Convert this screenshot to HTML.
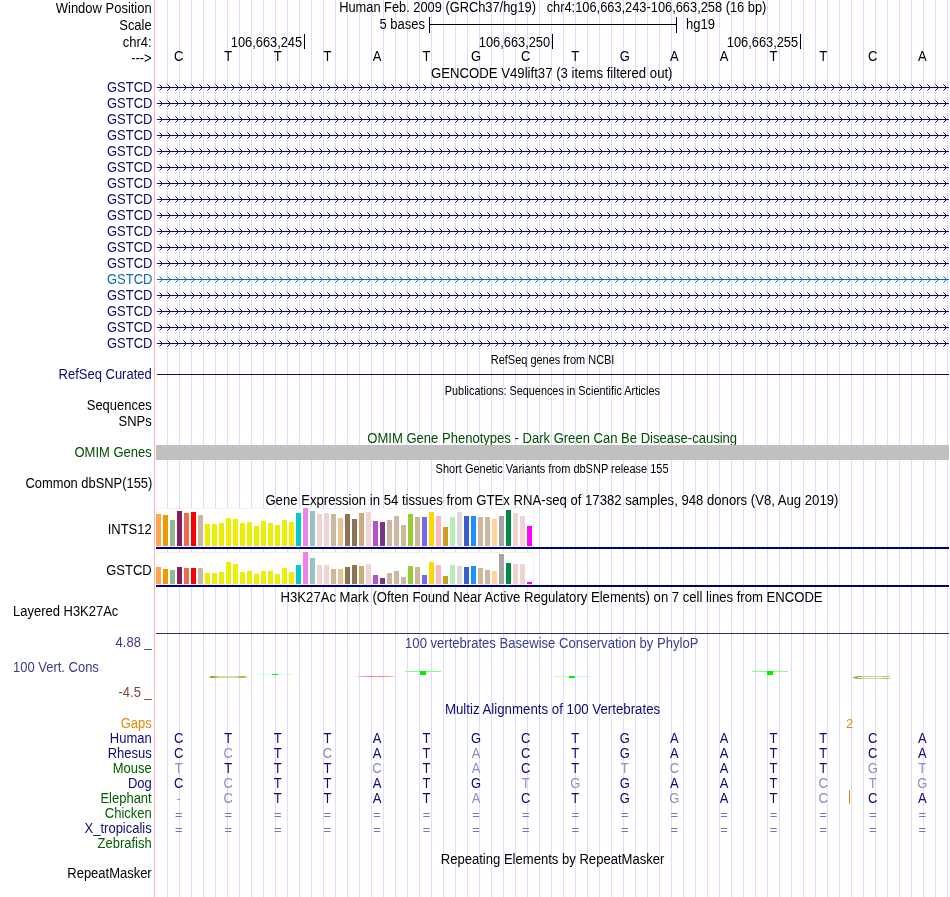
<!DOCTYPE html>
<html><head><meta charset="utf-8"><title>UCSC Genome Browser</title>
<style>html,body{margin:0;padding:0;background:#fff}svg{display:block;will-change:transform}text{font-size:13px;font-family:'Liberation Sans', sans-serif;white-space:pre}</style>
</head><body>
<svg width="950" height="897" viewBox="0 0 950 897">
<rect x="0" y="0" width="950" height="897" fill="#fff"/>
<g shape-rendering="crispEdges">
<rect x="167" y="0" width="1" height="897" fill="#dcdcff"/>
<rect x="179" y="0" width="1" height="897" fill="#dcdcff"/>
<rect x="191" y="0" width="1" height="897" fill="#dcdcff"/>
<rect x="203" y="0" width="1" height="897" fill="#dcdcff"/>
<rect x="215" y="0" width="1" height="897" fill="#dcdcff"/>
<rect x="227" y="0" width="1" height="897" fill="#dcdcff"/>
<rect x="239" y="0" width="1" height="897" fill="#dcdcff"/>
<rect x="251" y="0" width="1" height="897" fill="#dcdcff"/>
<rect x="263" y="0" width="1" height="897" fill="#dcdcff"/>
<rect x="275" y="0" width="1" height="897" fill="#dcdcff"/>
<rect x="287" y="0" width="1" height="897" fill="#dcdcff"/>
<rect x="299" y="0" width="1" height="897" fill="#dcdcff"/>
<rect x="311" y="0" width="1" height="897" fill="#dcdcff"/>
<rect x="323" y="0" width="1" height="897" fill="#dcdcff"/>
<rect x="335" y="0" width="1" height="897" fill="#dcdcff"/>
<rect x="347" y="0" width="1" height="897" fill="#dcdcff"/>
<rect x="359" y="0" width="1" height="897" fill="#dcdcff"/>
<rect x="371" y="0" width="1" height="897" fill="#dcdcff"/>
<rect x="383" y="0" width="1" height="897" fill="#dcdcff"/>
<rect x="395" y="0" width="1" height="897" fill="#dcdcff"/>
<rect x="407" y="0" width="1" height="897" fill="#dcdcff"/>
<rect x="419" y="0" width="1" height="897" fill="#dcdcff"/>
<rect x="431" y="0" width="1" height="897" fill="#dcdcff"/>
<rect x="443" y="0" width="1" height="897" fill="#dcdcff"/>
<rect x="455" y="0" width="1" height="897" fill="#dcdcff"/>
<rect x="467" y="0" width="1" height="897" fill="#dcdcff"/>
<rect x="479" y="0" width="1" height="897" fill="#dcdcff"/>
<rect x="491" y="0" width="1" height="897" fill="#dcdcff"/>
<rect x="503" y="0" width="1" height="897" fill="#dcdcff"/>
<rect x="515" y="0" width="1" height="897" fill="#dcdcff"/>
<rect x="527" y="0" width="1" height="897" fill="#dcdcff"/>
<rect x="539" y="0" width="1" height="897" fill="#dcdcff"/>
<rect x="551" y="0" width="1" height="897" fill="#dcdcff"/>
<rect x="563" y="0" width="1" height="897" fill="#dcdcff"/>
<rect x="575" y="0" width="1" height="897" fill="#dcdcff"/>
<rect x="587" y="0" width="1" height="897" fill="#dcdcff"/>
<rect x="599" y="0" width="1" height="897" fill="#dcdcff"/>
<rect x="611" y="0" width="1" height="897" fill="#dcdcff"/>
<rect x="623" y="0" width="1" height="897" fill="#dcdcff"/>
<rect x="635" y="0" width="1" height="897" fill="#dcdcff"/>
<rect x="647" y="0" width="1" height="897" fill="#dcdcff"/>
<rect x="659" y="0" width="1" height="897" fill="#dcdcff"/>
<rect x="671" y="0" width="1" height="897" fill="#dcdcff"/>
<rect x="683" y="0" width="1" height="897" fill="#dcdcff"/>
<rect x="695" y="0" width="1" height="897" fill="#dcdcff"/>
<rect x="707" y="0" width="1" height="897" fill="#dcdcff"/>
<rect x="719" y="0" width="1" height="897" fill="#dcdcff"/>
<rect x="731" y="0" width="1" height="897" fill="#dcdcff"/>
<rect x="743" y="0" width="1" height="897" fill="#dcdcff"/>
<rect x="755" y="0" width="1" height="897" fill="#dcdcff"/>
<rect x="767" y="0" width="1" height="897" fill="#dcdcff"/>
<rect x="779" y="0" width="1" height="897" fill="#dcdcff"/>
<rect x="791" y="0" width="1" height="897" fill="#dcdcff"/>
<rect x="803" y="0" width="1" height="897" fill="#dcdcff"/>
<rect x="815" y="0" width="1" height="897" fill="#dcdcff"/>
<rect x="827" y="0" width="1" height="897" fill="#dcdcff"/>
<rect x="839" y="0" width="1" height="897" fill="#dcdcff"/>
<rect x="851" y="0" width="1" height="897" fill="#dcdcff"/>
<rect x="863" y="0" width="1" height="897" fill="#dcdcff"/>
<rect x="875" y="0" width="1" height="897" fill="#dcdcff"/>
<rect x="887" y="0" width="1" height="897" fill="#dcdcff"/>
<rect x="899" y="0" width="1" height="897" fill="#dcdcff"/>
<rect x="911" y="0" width="1" height="897" fill="#dcdcff"/>
<rect x="923" y="0" width="1" height="897" fill="#dcdcff"/>
<rect x="935" y="0" width="1" height="897" fill="#dcdcff"/>
<rect x="947" y="0" width="1" height="897" fill="#dcdcff"/>
<rect x="154" y="0" width="1" height="897" fill="#ffb4b4"/>
</g>
<text transform="translate(151.7 13) scale(1 1.06)" text-anchor="end">Window Position</text>
<text transform="translate(151.7 30) scale(1 1.06)" text-anchor="end">Scale</text>
<text transform="translate(151.7 47) scale(1 1.06)" text-anchor="end">chr4:</text>
<text transform="translate(151.7 63) scale(1 1.06)" text-anchor="end">---&gt;</text>
<text transform="translate(339.2 12) scale(1 1.06)" textLength="427.1" lengthAdjust="spacingAndGlyphs">Human Feb. 2009 (GRCh37/hg19)   chr4:106,663,243-106,663,258 (16 bp)</text>
<text transform="translate(425 29) scale(1 1.06)" text-anchor="end">5 bases</text>
<text transform="translate(686 29) scale(1 1.06)">hg19</text>
<g shape-rendering="crispEdges">
<rect x="429" y="24" width="248" height="1" fill="#000"/>
<rect x="429" y="17" width="1" height="16" fill="#000"/>
<rect x="676" y="17" width="1" height="16" fill="#000"/>
<rect x="304" y="34" width="1" height="15" fill="#000"/>
<rect x="552" y="34" width="1" height="15" fill="#000"/>
<rect x="800" y="34" width="1" height="15" fill="#000"/>
</g>
<text transform="translate(230.8 47) scale(1 1.06)" textLength="71.3" lengthAdjust="spacingAndGlyphs">106,663,245</text>
<text transform="translate(478.8 47) scale(1 1.06)" textLength="71.3" lengthAdjust="spacingAndGlyphs">106,663,250</text>
<text transform="translate(726.8 47) scale(1 1.06)" textLength="71.3" lengthAdjust="spacingAndGlyphs">106,663,255</text>
<text transform="translate(178.7 61) scale(1 1.06)" text-anchor="middle">C</text>
<text transform="translate(228.3 61) scale(1 1.06)" text-anchor="middle">T</text>
<text transform="translate(277.8 61) scale(1 1.06)" text-anchor="middle">T</text>
<text transform="translate(327.4 61) scale(1 1.06)" text-anchor="middle">T</text>
<text transform="translate(377.0 61) scale(1 1.06)" text-anchor="middle">A</text>
<text transform="translate(426.5 61) scale(1 1.06)" text-anchor="middle">T</text>
<text transform="translate(476.1 61) scale(1 1.06)" text-anchor="middle">G</text>
<text transform="translate(525.7 61) scale(1 1.06)" text-anchor="middle">C</text>
<text transform="translate(575.3 61) scale(1 1.06)" text-anchor="middle">T</text>
<text transform="translate(624.8 61) scale(1 1.06)" text-anchor="middle">G</text>
<text transform="translate(674.4 61) scale(1 1.06)" text-anchor="middle">A</text>
<text transform="translate(724.0 61) scale(1 1.06)" text-anchor="middle">A</text>
<text transform="translate(773.5 61) scale(1 1.06)" text-anchor="middle">T</text>
<text transform="translate(823.1 61) scale(1 1.06)" text-anchor="middle">T</text>
<text transform="translate(872.7 61) scale(1 1.06)" text-anchor="middle">C</text>
<text transform="translate(922.2 61) scale(1 1.06)" text-anchor="middle">A</text>
<text transform="translate(431.0 78) scale(1 1.06)" textLength="241.5" lengthAdjust="spacingAndGlyphs">GENCODE V49lift37 (3 items filtered out)</text>
<defs><path id="cv" d="M157 0.5H949M159.5 -2.5l3 3l-3 3M167.5 -2.5l3 3l-3 3M175.5 -2.5l3 3l-3 3M183.5 -2.5l3 3l-3 3M191.5 -2.5l3 3l-3 3M199.5 -2.5l3 3l-3 3M207.5 -2.5l3 3l-3 3M215.5 -2.5l3 3l-3 3M223.5 -2.5l3 3l-3 3M231.5 -2.5l3 3l-3 3M239.5 -2.5l3 3l-3 3M247.5 -2.5l3 3l-3 3M255.5 -2.5l3 3l-3 3M263.5 -2.5l3 3l-3 3M271.5 -2.5l3 3l-3 3M279.5 -2.5l3 3l-3 3M287.5 -2.5l3 3l-3 3M295.5 -2.5l3 3l-3 3M303.5 -2.5l3 3l-3 3M311.5 -2.5l3 3l-3 3M319.5 -2.5l3 3l-3 3M327.5 -2.5l3 3l-3 3M335.5 -2.5l3 3l-3 3M343.5 -2.5l3 3l-3 3M351.5 -2.5l3 3l-3 3M359.5 -2.5l3 3l-3 3M367.5 -2.5l3 3l-3 3M375.5 -2.5l3 3l-3 3M383.5 -2.5l3 3l-3 3M391.5 -2.5l3 3l-3 3M399.5 -2.5l3 3l-3 3M407.5 -2.5l3 3l-3 3M415.5 -2.5l3 3l-3 3M423.5 -2.5l3 3l-3 3M431.5 -2.5l3 3l-3 3M439.5 -2.5l3 3l-3 3M447.5 -2.5l3 3l-3 3M455.5 -2.5l3 3l-3 3M463.5 -2.5l3 3l-3 3M471.5 -2.5l3 3l-3 3M479.5 -2.5l3 3l-3 3M487.5 -2.5l3 3l-3 3M495.5 -2.5l3 3l-3 3M503.5 -2.5l3 3l-3 3M511.5 -2.5l3 3l-3 3M519.5 -2.5l3 3l-3 3M527.5 -2.5l3 3l-3 3M535.5 -2.5l3 3l-3 3M543.5 -2.5l3 3l-3 3M551.5 -2.5l3 3l-3 3M559.5 -2.5l3 3l-3 3M567.5 -2.5l3 3l-3 3M575.5 -2.5l3 3l-3 3M583.5 -2.5l3 3l-3 3M591.5 -2.5l3 3l-3 3M599.5 -2.5l3 3l-3 3M607.5 -2.5l3 3l-3 3M615.5 -2.5l3 3l-3 3M623.5 -2.5l3 3l-3 3M631.5 -2.5l3 3l-3 3M639.5 -2.5l3 3l-3 3M647.5 -2.5l3 3l-3 3M655.5 -2.5l3 3l-3 3M663.5 -2.5l3 3l-3 3M671.5 -2.5l3 3l-3 3M679.5 -2.5l3 3l-3 3M687.5 -2.5l3 3l-3 3M695.5 -2.5l3 3l-3 3M703.5 -2.5l3 3l-3 3M711.5 -2.5l3 3l-3 3M719.5 -2.5l3 3l-3 3M727.5 -2.5l3 3l-3 3M735.5 -2.5l3 3l-3 3M743.5 -2.5l3 3l-3 3M751.5 -2.5l3 3l-3 3M759.5 -2.5l3 3l-3 3M767.5 -2.5l3 3l-3 3M775.5 -2.5l3 3l-3 3M783.5 -2.5l3 3l-3 3M791.5 -2.5l3 3l-3 3M799.5 -2.5l3 3l-3 3M807.5 -2.5l3 3l-3 3M815.5 -2.5l3 3l-3 3M823.5 -2.5l3 3l-3 3M831.5 -2.5l3 3l-3 3M839.5 -2.5l3 3l-3 3M847.5 -2.5l3 3l-3 3M855.5 -2.5l3 3l-3 3M863.5 -2.5l3 3l-3 3M871.5 -2.5l3 3l-3 3M879.5 -2.5l3 3l-3 3M887.5 -2.5l3 3l-3 3M895.5 -2.5l3 3l-3 3M903.5 -2.5l3 3l-3 3M911.5 -2.5l3 3l-3 3M919.5 -2.5l3 3l-3 3M927.5 -2.5l3 3l-3 3M935.5 -2.5l3 3l-3 3M943.5 -2.5l3 3l-3 3" fill="none" stroke-width="1"/></defs>
<text transform="translate(152.4 92) scale(1 1.06)" text-anchor="end" fill="#0c0c78">GSTCD</text>
<use href="#cv" y="87" stroke="#0c0c78"/>
<text transform="translate(152.4 108) scale(1 1.06)" text-anchor="end" fill="#0c0c78">GSTCD</text>
<use href="#cv" y="103" stroke="#0c0c78"/>
<text transform="translate(152.4 124) scale(1 1.06)" text-anchor="end" fill="#0c0c78">GSTCD</text>
<use href="#cv" y="119" stroke="#0c0c78"/>
<text transform="translate(152.4 140) scale(1 1.06)" text-anchor="end" fill="#0c0c78">GSTCD</text>
<use href="#cv" y="135" stroke="#0c0c78"/>
<text transform="translate(152.4 156) scale(1 1.06)" text-anchor="end" fill="#0c0c78">GSTCD</text>
<use href="#cv" y="151" stroke="#0c0c78"/>
<text transform="translate(152.4 172) scale(1 1.06)" text-anchor="end" fill="#0c0c78">GSTCD</text>
<use href="#cv" y="167" stroke="#0c0c78"/>
<text transform="translate(152.4 188) scale(1 1.06)" text-anchor="end" fill="#0c0c78">GSTCD</text>
<use href="#cv" y="183" stroke="#0c0c78"/>
<text transform="translate(152.4 204) scale(1 1.06)" text-anchor="end" fill="#0c0c78">GSTCD</text>
<use href="#cv" y="199" stroke="#0c0c78"/>
<text transform="translate(152.4 220) scale(1 1.06)" text-anchor="end" fill="#0c0c78">GSTCD</text>
<use href="#cv" y="215" stroke="#0c0c78"/>
<text transform="translate(152.4 236) scale(1 1.06)" text-anchor="end" fill="#0c0c78">GSTCD</text>
<use href="#cv" y="231" stroke="#0c0c78"/>
<text transform="translate(152.4 252) scale(1 1.06)" text-anchor="end" fill="#0c0c78">GSTCD</text>
<use href="#cv" y="247" stroke="#0c0c78"/>
<text transform="translate(152.4 268) scale(1 1.06)" text-anchor="end" fill="#0c0c78">GSTCD</text>
<use href="#cv" y="263" stroke="#0c0c78"/>
<text transform="translate(152.4 284) scale(1 1.06)" text-anchor="end" fill="#0a6cae">GSTCD</text>
<use href="#cv" y="279" stroke="#0a6cae"/>
<text transform="translate(152.4 300) scale(1 1.06)" text-anchor="end" fill="#0c0c78">GSTCD</text>
<use href="#cv" y="295" stroke="#0c0c78"/>
<text transform="translate(152.4 316) scale(1 1.06)" text-anchor="end" fill="#0c0c78">GSTCD</text>
<use href="#cv" y="311" stroke="#0c0c78"/>
<text transform="translate(152.4 332) scale(1 1.06)" text-anchor="end" fill="#0c0c78">GSTCD</text>
<use href="#cv" y="327" stroke="#0c0c78"/>
<text transform="translate(152.4 348) scale(1 1.06)" text-anchor="end" fill="#0c0c78">GSTCD</text>
<use href="#cv" y="343" stroke="#0c0c78"/>
<text x="490.8" y="364" font-size="11" textLength="123.6" lengthAdjust="spacingAndGlyphs">RefSeq genes from NCBI</text>
<text transform="translate(151.7 379) scale(1 1.06)" text-anchor="end" fill="#0c0c78">RefSeq Curated</text>
<rect x="157" y="374" width="792" height="1" fill="#0c0c78" shape-rendering="crispEdges"/>
<text x="444.8" y="395" font-size="11" textLength="215.1" lengthAdjust="spacingAndGlyphs">Publications: Sequences in Scientific Articles</text>
<text transform="translate(151.7 410) scale(1 1.06)" text-anchor="end">Sequences</text>
<text transform="translate(151.7 426) scale(1 1.06)" text-anchor="end">SNPs</text>
<text transform="translate(367.3 443) scale(1 1.06)" fill="#005000" textLength="369.8" lengthAdjust="spacingAndGlyphs">OMIM Gene Phenotypes - Dark Green Can Be Disease-causing</text>
<text transform="translate(151.7 457) scale(1 1.06)" text-anchor="end" fill="#005000">OMIM Genes</text>
<rect x="156" y="445" width="793" height="15" fill="#c0c0c0" shape-rendering="crispEdges"/>
<text x="435.6" y="473" font-size="11" textLength="232.9" lengthAdjust="spacingAndGlyphs">Short Genetic Variants from dbSNP release 155</text>
<text transform="translate(25.5 488) scale(1 1.06)" textLength="126.8" lengthAdjust="spacingAndGlyphs">Common dbSNP(155)</text>
<text transform="translate(265.4 504.5) scale(1 1.06)" textLength="573.0" lengthAdjust="spacingAndGlyphs">Gene Expression in 54 tissues from GTEx RNA-seq of 17382 samples, 948 donors (V8, Aug 2019)</text>
<g shape-rendering="crispEdges">
<rect x="156" y="508" width="378" height="39" fill="#f2f2f2"/>
<rect x="157" y="509" width="376" height="37" fill="#fff"/>
<rect x="156" y="552" width="378" height="33" fill="#f2f2f2"/>
<rect x="157" y="553" width="376" height="31" fill="#fff"/>
<rect x="156" y="514" width="5" height="32" fill="#FFA54F"/>
<rect x="156" y="567" width="5" height="17" fill="#FFA54F"/>
<rect x="163" y="515" width="5" height="31" fill="#EE9A00"/>
<rect x="163" y="569" width="5" height="15" fill="#EE9A00"/>
<rect x="170" y="520" width="5" height="26" fill="#8FBC8F"/>
<rect x="170" y="570" width="5" height="14" fill="#8FBC8F"/>
<rect x="177" y="511" width="5" height="35" fill="#8B1C62"/>
<rect x="177" y="567" width="5" height="17" fill="#8B1C62"/>
<rect x="184" y="513" width="5" height="33" fill="#EE6A50"/>
<rect x="184" y="568" width="5" height="16" fill="#EE6A50"/>
<rect x="191" y="512" width="5" height="34" fill="#FF0000"/>
<rect x="191" y="568" width="5" height="16" fill="#FF0000"/>
<rect x="198" y="515" width="5" height="31" fill="#CDB79E"/>
<rect x="198" y="568" width="5" height="16" fill="#CDB79E"/>
<rect x="205" y="524" width="5" height="22" fill="#EEEE00"/>
<rect x="205" y="573" width="5" height="11" fill="#EEEE00"/>
<rect x="212" y="524" width="5" height="22" fill="#EEEE00"/>
<rect x="212" y="573" width="5" height="11" fill="#EEEE00"/>
<rect x="219" y="523" width="5" height="23" fill="#EEEE00"/>
<rect x="219" y="572" width="5" height="12" fill="#EEEE00"/>
<rect x="226" y="518" width="5" height="28" fill="#EEEE00"/>
<rect x="226" y="562" width="5" height="22" fill="#EEEE00"/>
<rect x="233" y="519" width="5" height="27" fill="#EEEE00"/>
<rect x="233" y="564" width="5" height="20" fill="#EEEE00"/>
<rect x="240" y="523" width="5" height="23" fill="#EEEE00"/>
<rect x="240" y="572" width="5" height="12" fill="#EEEE00"/>
<rect x="247" y="522" width="5" height="24" fill="#EEEE00"/>
<rect x="247" y="571" width="5" height="13" fill="#EEEE00"/>
<rect x="254" y="526" width="5" height="20" fill="#EEEE00"/>
<rect x="254" y="574" width="5" height="10" fill="#EEEE00"/>
<rect x="261" y="521" width="5" height="25" fill="#EEEE00"/>
<rect x="261" y="571" width="5" height="13" fill="#EEEE00"/>
<rect x="268" y="523" width="5" height="23" fill="#EEEE00"/>
<rect x="268" y="571" width="5" height="13" fill="#EEEE00"/>
<rect x="275" y="525" width="5" height="21" fill="#EEEE00"/>
<rect x="275" y="574" width="5" height="10" fill="#EEEE00"/>
<rect x="282" y="520" width="5" height="26" fill="#EEEE00"/>
<rect x="282" y="568" width="5" height="16" fill="#EEEE00"/>
<rect x="289" y="522" width="5" height="24" fill="#EEEE00"/>
<rect x="289" y="572" width="5" height="12" fill="#EEEE00"/>
<rect x="296" y="513" width="5" height="33" fill="#00CDCD"/>
<rect x="296" y="565" width="5" height="19" fill="#00CDCD"/>
<rect x="303" y="508" width="5" height="38" fill="#EE82EE"/>
<rect x="303" y="552" width="5" height="32" fill="#EE82EE"/>
<rect x="310" y="511" width="5" height="35" fill="#9AC0CD"/>
<rect x="310" y="558" width="5" height="26" fill="#9AC0CD"/>
<rect x="317" y="514" width="5" height="32" fill="#EED5D2"/>
<rect x="317" y="565" width="5" height="19" fill="#EED5D2"/>
<rect x="324" y="513" width="5" height="33" fill="#EED5D2"/>
<rect x="324" y="565" width="5" height="19" fill="#EED5D2"/>
<rect x="331" y="514" width="5" height="32" fill="#CDB79E"/>
<rect x="331" y="569" width="5" height="15" fill="#CDB79E"/>
<rect x="338" y="518" width="5" height="28" fill="#EEC591"/>
<rect x="338" y="569" width="5" height="15" fill="#EEC591"/>
<rect x="345" y="514" width="5" height="32" fill="#8B7355"/>
<rect x="345" y="567" width="5" height="17" fill="#8B7355"/>
<rect x="352" y="519" width="5" height="27" fill="#8B7355"/>
<rect x="352" y="565" width="5" height="19" fill="#8B7355"/>
<rect x="359" y="513" width="5" height="33" fill="#CDAA7D"/>
<rect x="359" y="566" width="5" height="18" fill="#CDAA7D"/>
<rect x="366" y="512" width="5" height="34" fill="#EED5D2"/>
<rect x="366" y="564" width="5" height="20" fill="#EED5D2"/>
<rect x="373" y="521" width="5" height="25" fill="#B452CD"/>
<rect x="373" y="575" width="5" height="9" fill="#B452CD"/>
<rect x="380" y="522" width="5" height="24" fill="#7A378B"/>
<rect x="380" y="578" width="5" height="6" fill="#7A378B"/>
<rect x="387" y="520" width="5" height="26" fill="#CDB79E"/>
<rect x="387" y="573" width="5" height="11" fill="#CDB79E"/>
<rect x="394" y="516" width="5" height="30" fill="#CDB79E"/>
<rect x="394" y="571" width="5" height="13" fill="#CDB79E"/>
<rect x="401" y="525" width="5" height="21" fill="#CDB79E"/>
<rect x="401" y="577" width="5" height="7" fill="#CDB79E"/>
<rect x="408" y="514" width="5" height="32" fill="#9ACD32"/>
<rect x="408" y="566" width="5" height="18" fill="#9ACD32"/>
<rect x="415" y="517" width="5" height="29" fill="#CDB79E"/>
<rect x="415" y="567" width="5" height="17" fill="#CDB79E"/>
<rect x="422" y="517" width="5" height="29" fill="#7A67EE"/>
<rect x="422" y="575" width="5" height="9" fill="#7A67EE"/>
<rect x="429" y="512" width="5" height="34" fill="#FFD700"/>
<rect x="429" y="562" width="5" height="22" fill="#FFD700"/>
<rect x="436" y="516" width="5" height="30" fill="#FFB6C1"/>
<rect x="436" y="565" width="5" height="19" fill="#FFB6C1"/>
<rect x="443" y="527" width="5" height="19" fill="#CD9B1D"/>
<rect x="443" y="576" width="5" height="8" fill="#CD9B1D"/>
<rect x="450" y="517" width="5" height="29" fill="#B4EEB4"/>
<rect x="450" y="565" width="5" height="19" fill="#B4EEB4"/>
<rect x="457" y="512" width="5" height="34" fill="#D9D9D9"/>
<rect x="457" y="566" width="5" height="18" fill="#D9D9D9"/>
<rect x="464" y="516" width="5" height="30" fill="#3A5FCD"/>
<rect x="464" y="567" width="5" height="17" fill="#3A5FCD"/>
<rect x="471" y="516" width="5" height="30" fill="#1E90FF"/>
<rect x="471" y="566" width="5" height="18" fill="#1E90FF"/>
<rect x="478" y="517" width="5" height="29" fill="#CDB79E"/>
<rect x="478" y="568" width="5" height="16" fill="#CDB79E"/>
<rect x="485" y="517" width="5" height="29" fill="#CDB79E"/>
<rect x="485" y="570" width="5" height="14" fill="#CDB79E"/>
<rect x="492" y="519" width="5" height="27" fill="#FFD39B"/>
<rect x="492" y="571" width="5" height="13" fill="#FFD39B"/>
<rect x="499" y="516" width="5" height="30" fill="#A6A6A6"/>
<rect x="499" y="554" width="5" height="30" fill="#A6A6A6"/>
<rect x="506" y="510" width="5" height="36" fill="#008B45"/>
<rect x="506" y="563" width="5" height="21" fill="#008B45"/>
<rect x="513" y="513" width="5" height="33" fill="#EED5D2"/>
<rect x="513" y="564" width="5" height="20" fill="#EED5D2"/>
<rect x="520" y="516" width="5" height="30" fill="#EED5D2"/>
<rect x="520" y="564" width="5" height="20" fill="#EED5D2"/>
<rect x="527" y="526" width="5" height="20" fill="#FF00FF"/>
<rect x="527" y="582" width="5" height="2" fill="#FF00FF"/>
<rect x="156" y="547" width="793" height="2" fill="#00007f"/>
<rect x="156" y="585" width="793" height="2" fill="#00007f"/>
</g>
<text transform="translate(151.7 534) scale(1 1.06)" text-anchor="end">INTS12</text>
<text transform="translate(151.7 575) scale(1 1.06)" text-anchor="end">GSTCD</text>
<text transform="translate(280.6 602) scale(1 1.06)" textLength="542.0" lengthAdjust="spacingAndGlyphs">H3K27Ac Mark (Often Found Near Active Regulatory Elements) on 7 cell lines from ENCODE</text>
<text transform="translate(13 616) scale(1 1.06)">Layered H3K27Ac</text>
<rect x="156" y="633" width="793" height="1" fill="#3a2a6c" shape-rendering="crispEdges"/>
<text transform="translate(151.7 647) scale(1 1.06)" text-anchor="end" fill="#3c3c8c">4.88 _</text>
<text transform="translate(405.1 648) scale(1 1.06)" fill="#3c3c8c" textLength="293.3" lengthAdjust="spacingAndGlyphs">100 vertebrates Basewise Conservation by PhyloP</text>
<text transform="translate(13 672) scale(1 1.06)" fill="#3c3c8c">100 Vert. Cons</text>
<text transform="translate(151.7 697) scale(1 1.06)" text-anchor="end" fill="#8c3c3c">-4.5 _</text>
<defs><linearGradient id="ol1" x1="0" x2="1" y1="0" y2="0"><stop offset="0" stop-color="#bcbc50"/><stop offset="0.05" stop-color="#a4a41c"/><stop offset="0.14" stop-color="#b0b034"/><stop offset="0.24" stop-color="#d6d69a"/><stop offset="0.72" stop-color="#dadaa4"/><stop offset="0.82" stop-color="#b8b848"/><stop offset="0.92" stop-color="#b4b440"/><stop offset="1" stop-color="#e6e6c0"/></linearGradient><linearGradient id="ol2" x1="0" x2="1" y1="0" y2="0"><stop offset="0" stop-color="#a8a828"/><stop offset="0.2" stop-color="#b0b030"/><stop offset="0.3" stop-color="#d2d290"/><stop offset="0.75" stop-color="#d2d290"/><stop offset="0.85" stop-color="#b4b43c"/><stop offset="0.95" stop-color="#c4c468"/><stop offset="1" stop-color="#e8e8c8"/></linearGradient><linearGradient id="rd" x1="0" x2="1" y1="0" y2="0"><stop offset="0" stop-color="#ffd8d8"/><stop offset="0.15" stop-color="#ff9c9c"/><stop offset="0.38" stop-color="#ff7070"/><stop offset="0.5" stop-color="#ffa8a8"/><stop offset="0.68" stop-color="#ff7474"/><stop offset="0.88" stop-color="#ffa0a0"/><stop offset="1" stop-color="#ffdcdc"/></linearGradient></defs>
<g shape-rendering="crispEdges">
<rect x="209.5" y="676" width="37.5" height="2" fill="url(#ol1)" shape-rendering="auto"/>
<rect x="257" y="674" width="36" height="1" fill="#d4ffd4"/>
<rect x="272" y="674" width="6" height="1" fill="#00ee00"/>
<rect x="357" y="676" width="37.5" height="1" fill="url(#rd)"/>
<rect x="405" y="671" width="36" height="1" fill="#84ff84"/>
<rect x="420" y="671" width="6" height="4" fill="#00ee00"/>
<rect x="554" y="676" width="36" height="1" fill="#c8ffc8"/>
<rect x="569" y="676" width="6" height="2" fill="#00ee00"/>
<rect x="752" y="671" width="36" height="1" fill="#84ff84"/>
<rect x="767" y="671" width="6" height="4" fill="#00ee00"/>
</g>
<path d="M853 677.5L858 676.5H890.5M853 677.5L858 678.5H890.5" stroke="url(#ol2)" stroke-width="1" fill="none"/>
<rect x="853" y="677" width="5" height="1" fill="#a8a820" shape-rendering="crispEdges"/>
<text transform="translate(444.9 714) scale(1 1.06)" fill="#0c0c78" textLength="215.3" lengthAdjust="spacingAndGlyphs">Multiz Alignments of 100 Vertebrates</text>
<text transform="translate(151.7 728) scale(1 1.06)" text-anchor="end" fill="#e68a00">Gaps</text>
<text x="849.6" y="728" font-size="12" text-anchor="middle" fill="#e68a00">2</text>
<rect x="849" y="790" width="1" height="14" fill="#e68a00" shape-rendering="crispEdges"/>
<text transform="translate(151.7 743) scale(1 1.06)" text-anchor="end" fill="#0c0c78">Human</text>
<text transform="translate(178.7 742.8) scale(1 1.06)" text-anchor="middle" fill="#0c0c78">C</text>
<text transform="translate(228.3 742.8) scale(1 1.06)" text-anchor="middle" fill="#0c0c78">T</text>
<text transform="translate(277.8 742.8) scale(1 1.06)" text-anchor="middle" fill="#0c0c78">T</text>
<text transform="translate(327.4 742.8) scale(1 1.06)" text-anchor="middle" fill="#0c0c78">T</text>
<text transform="translate(377.0 742.8) scale(1 1.06)" text-anchor="middle" fill="#0c0c78">A</text>
<text transform="translate(426.5 742.8) scale(1 1.06)" text-anchor="middle" fill="#0c0c78">T</text>
<text transform="translate(476.1 742.8) scale(1 1.06)" text-anchor="middle" fill="#0c0c78">G</text>
<text transform="translate(525.7 742.8) scale(1 1.06)" text-anchor="middle" fill="#0c0c78">C</text>
<text transform="translate(575.3 742.8) scale(1 1.06)" text-anchor="middle" fill="#0c0c78">T</text>
<text transform="translate(624.8 742.8) scale(1 1.06)" text-anchor="middle" fill="#0c0c78">G</text>
<text transform="translate(674.4 742.8) scale(1 1.06)" text-anchor="middle" fill="#0c0c78">A</text>
<text transform="translate(724.0 742.8) scale(1 1.06)" text-anchor="middle" fill="#0c0c78">A</text>
<text transform="translate(773.5 742.8) scale(1 1.06)" text-anchor="middle" fill="#0c0c78">T</text>
<text transform="translate(823.1 742.8) scale(1 1.06)" text-anchor="middle" fill="#0c0c78">T</text>
<text transform="translate(872.7 742.8) scale(1 1.06)" text-anchor="middle" fill="#0c0c78">C</text>
<text transform="translate(922.2 742.8) scale(1 1.06)" text-anchor="middle" fill="#0c0c78">A</text>
<text transform="translate(151.7 758) scale(1 1.06)" text-anchor="end" fill="#0c0c78">Rhesus</text>
<text transform="translate(178.7 758) scale(1 1.06)" text-anchor="middle" fill="#0c0c78">C</text>
<text transform="translate(228.3 758) scale(1 1.06)" text-anchor="middle" fill="#8e8ec2">C</text>
<text transform="translate(277.8 758) scale(1 1.06)" text-anchor="middle" fill="#0c0c78">T</text>
<text transform="translate(327.4 758) scale(1 1.06)" text-anchor="middle" fill="#8e8ec2">C</text>
<text transform="translate(377.0 758) scale(1 1.06)" text-anchor="middle" fill="#0c0c78">A</text>
<text transform="translate(426.5 758) scale(1 1.06)" text-anchor="middle" fill="#0c0c78">T</text>
<text transform="translate(476.1 758) scale(1 1.06)" text-anchor="middle" fill="#8e8ec2">A</text>
<text transform="translate(525.7 758) scale(1 1.06)" text-anchor="middle" fill="#0c0c78">C</text>
<text transform="translate(575.3 758) scale(1 1.06)" text-anchor="middle" fill="#0c0c78">T</text>
<text transform="translate(624.8 758) scale(1 1.06)" text-anchor="middle" fill="#0c0c78">G</text>
<text transform="translate(674.4 758) scale(1 1.06)" text-anchor="middle" fill="#0c0c78">A</text>
<text transform="translate(724.0 758) scale(1 1.06)" text-anchor="middle" fill="#0c0c78">A</text>
<text transform="translate(773.5 758) scale(1 1.06)" text-anchor="middle" fill="#0c0c78">T</text>
<text transform="translate(823.1 758) scale(1 1.06)" text-anchor="middle" fill="#0c0c78">T</text>
<text transform="translate(872.7 758) scale(1 1.06)" text-anchor="middle" fill="#0c0c78">C</text>
<text transform="translate(922.2 758) scale(1 1.06)" text-anchor="middle" fill="#0c0c78">A</text>
<text transform="translate(151.7 773) scale(1 1.06)" text-anchor="end" fill="#005f00">Mouse</text>
<text transform="translate(178.7 773) scale(1 1.06)" text-anchor="middle" fill="#8e8ec2">T</text>
<text transform="translate(228.3 773) scale(1 1.06)" text-anchor="middle" fill="#0c0c78">T</text>
<text transform="translate(277.8 773) scale(1 1.06)" text-anchor="middle" fill="#0c0c78">T</text>
<text transform="translate(327.4 773) scale(1 1.06)" text-anchor="middle" fill="#0c0c78">T</text>
<text transform="translate(377.0 773) scale(1 1.06)" text-anchor="middle" fill="#8e8ec2">C</text>
<text transform="translate(426.5 773) scale(1 1.06)" text-anchor="middle" fill="#0c0c78">T</text>
<text transform="translate(476.1 773) scale(1 1.06)" text-anchor="middle" fill="#8e8ec2">A</text>
<text transform="translate(525.7 773) scale(1 1.06)" text-anchor="middle" fill="#0c0c78">C</text>
<text transform="translate(575.3 773) scale(1 1.06)" text-anchor="middle" fill="#0c0c78">T</text>
<text transform="translate(624.8 773) scale(1 1.06)" text-anchor="middle" fill="#8e8ec2">T</text>
<text transform="translate(674.4 773) scale(1 1.06)" text-anchor="middle" fill="#8e8ec2">C</text>
<text transform="translate(724.0 773) scale(1 1.06)" text-anchor="middle" fill="#0c0c78">A</text>
<text transform="translate(773.5 773) scale(1 1.06)" text-anchor="middle" fill="#0c0c78">T</text>
<text transform="translate(823.1 773) scale(1 1.06)" text-anchor="middle" fill="#0c0c78">T</text>
<text transform="translate(872.7 773) scale(1 1.06)" text-anchor="middle" fill="#8e8ec2">G</text>
<text transform="translate(922.2 773) scale(1 1.06)" text-anchor="middle" fill="#8e8ec2">T</text>
<text transform="translate(151.7 788) scale(1 1.06)" text-anchor="end" fill="#0c0c78">Dog</text>
<text transform="translate(178.7 788) scale(1 1.06)" text-anchor="middle" fill="#0c0c78">C</text>
<text transform="translate(228.3 788) scale(1 1.06)" text-anchor="middle" fill="#8e8ec2">C</text>
<text transform="translate(277.8 788) scale(1 1.06)" text-anchor="middle" fill="#0c0c78">T</text>
<text transform="translate(327.4 788) scale(1 1.06)" text-anchor="middle" fill="#0c0c78">T</text>
<text transform="translate(377.0 788) scale(1 1.06)" text-anchor="middle" fill="#0c0c78">A</text>
<text transform="translate(426.5 788) scale(1 1.06)" text-anchor="middle" fill="#0c0c78">T</text>
<text transform="translate(476.1 788) scale(1 1.06)" text-anchor="middle" fill="#0c0c78">G</text>
<text transform="translate(525.7 788) scale(1 1.06)" text-anchor="middle" fill="#8e8ec2">T</text>
<text transform="translate(575.3 788) scale(1 1.06)" text-anchor="middle" fill="#8e8ec2">G</text>
<text transform="translate(624.8 788) scale(1 1.06)" text-anchor="middle" fill="#0c0c78">G</text>
<text transform="translate(674.4 788) scale(1 1.06)" text-anchor="middle" fill="#0c0c78">A</text>
<text transform="translate(724.0 788) scale(1 1.06)" text-anchor="middle" fill="#0c0c78">A</text>
<text transform="translate(773.5 788) scale(1 1.06)" text-anchor="middle" fill="#0c0c78">T</text>
<text transform="translate(823.1 788) scale(1 1.06)" text-anchor="middle" fill="#8e8ec2">C</text>
<text transform="translate(872.7 788) scale(1 1.06)" text-anchor="middle" fill="#8e8ec2">T</text>
<text transform="translate(922.2 788) scale(1 1.06)" text-anchor="middle" fill="#8e8ec2">G</text>
<text transform="translate(151.7 803) scale(1 1.06)" text-anchor="end" fill="#005f00">Elephant</text>
<text x="178.7" y="803" text-anchor="middle" fill="#8e8ec2">-</text>
<text transform="translate(228.3 803) scale(1 1.06)" text-anchor="middle" fill="#8e8ec2">C</text>
<text transform="translate(277.8 803) scale(1 1.06)" text-anchor="middle" fill="#0c0c78">T</text>
<text transform="translate(327.4 803) scale(1 1.06)" text-anchor="middle" fill="#0c0c78">T</text>
<text transform="translate(377.0 803) scale(1 1.06)" text-anchor="middle" fill="#0c0c78">A</text>
<text transform="translate(426.5 803) scale(1 1.06)" text-anchor="middle" fill="#0c0c78">T</text>
<text transform="translate(476.1 803) scale(1 1.06)" text-anchor="middle" fill="#8e8ec2">A</text>
<text transform="translate(525.7 803) scale(1 1.06)" text-anchor="middle" fill="#0c0c78">C</text>
<text transform="translate(575.3 803) scale(1 1.06)" text-anchor="middle" fill="#0c0c78">T</text>
<text transform="translate(624.8 803) scale(1 1.06)" text-anchor="middle" fill="#0c0c78">G</text>
<text transform="translate(674.4 803) scale(1 1.06)" text-anchor="middle" fill="#8e8ec2">G</text>
<text transform="translate(724.0 803) scale(1 1.06)" text-anchor="middle" fill="#0c0c78">A</text>
<text transform="translate(773.5 803) scale(1 1.06)" text-anchor="middle" fill="#0c0c78">T</text>
<text transform="translate(823.1 803) scale(1 1.06)" text-anchor="middle" fill="#8e8ec2">C</text>
<text transform="translate(872.7 803) scale(1 1.06)" text-anchor="middle" fill="#0c0c78">C</text>
<text transform="translate(922.2 803) scale(1 1.06)" text-anchor="middle" fill="#0c0c78">A</text>
<text transform="translate(151.7 818) scale(1 1.06)" text-anchor="end" fill="#005f00">Chicken</text>
<text x="178.7" y="819" text-anchor="middle" fill="#7878b0">=</text>
<text x="228.3" y="819" text-anchor="middle" fill="#7878b0">=</text>
<text x="277.8" y="819" text-anchor="middle" fill="#7878b0">=</text>
<text x="327.4" y="819" text-anchor="middle" fill="#7878b0">=</text>
<text x="377.0" y="819" text-anchor="middle" fill="#7878b0">=</text>
<text x="426.5" y="819" text-anchor="middle" fill="#7878b0">=</text>
<text x="476.1" y="819" text-anchor="middle" fill="#7878b0">=</text>
<text x="525.7" y="819" text-anchor="middle" fill="#7878b0">=</text>
<text x="575.3" y="819" text-anchor="middle" fill="#7878b0">=</text>
<text x="624.8" y="819" text-anchor="middle" fill="#7878b0">=</text>
<text x="674.4" y="819" text-anchor="middle" fill="#7878b0">=</text>
<text x="724.0" y="819" text-anchor="middle" fill="#7878b0">=</text>
<text x="773.5" y="819" text-anchor="middle" fill="#7878b0">=</text>
<text x="823.1" y="819" text-anchor="middle" fill="#7878b0">=</text>
<text x="872.7" y="819" text-anchor="middle" fill="#7878b0">=</text>
<text x="922.2" y="819" text-anchor="middle" fill="#7878b0">=</text>
<text transform="translate(151.7 833) scale(1 1.06)" text-anchor="end" fill="#0c0c78">X_tropicalis</text>
<text x="178.7" y="834" text-anchor="middle" fill="#7878b0">=</text>
<text x="228.3" y="834" text-anchor="middle" fill="#7878b0">=</text>
<text x="277.8" y="834" text-anchor="middle" fill="#7878b0">=</text>
<text x="327.4" y="834" text-anchor="middle" fill="#7878b0">=</text>
<text x="377.0" y="834" text-anchor="middle" fill="#7878b0">=</text>
<text x="426.5" y="834" text-anchor="middle" fill="#7878b0">=</text>
<text x="476.1" y="834" text-anchor="middle" fill="#7878b0">=</text>
<text x="525.7" y="834" text-anchor="middle" fill="#7878b0">=</text>
<text x="575.3" y="834" text-anchor="middle" fill="#7878b0">=</text>
<text x="624.8" y="834" text-anchor="middle" fill="#7878b0">=</text>
<text x="674.4" y="834" text-anchor="middle" fill="#7878b0">=</text>
<text x="724.0" y="834" text-anchor="middle" fill="#7878b0">=</text>
<text x="773.5" y="834" text-anchor="middle" fill="#7878b0">=</text>
<text x="823.1" y="834" text-anchor="middle" fill="#7878b0">=</text>
<text x="872.7" y="834" text-anchor="middle" fill="#7878b0">=</text>
<text x="922.2" y="834" text-anchor="middle" fill="#7878b0">=</text>
<text transform="translate(151.7 848) scale(1 1.06)" text-anchor="end" fill="#005f00">Zebrafish</text>
<text transform="translate(440.7 864) scale(1 1.06)" textLength="223.7" lengthAdjust="spacingAndGlyphs">Repeating Elements by RepeatMasker</text>
<text transform="translate(151.7 878) scale(1 1.06)" text-anchor="end">RepeatMasker</text>
</svg></body></html>
